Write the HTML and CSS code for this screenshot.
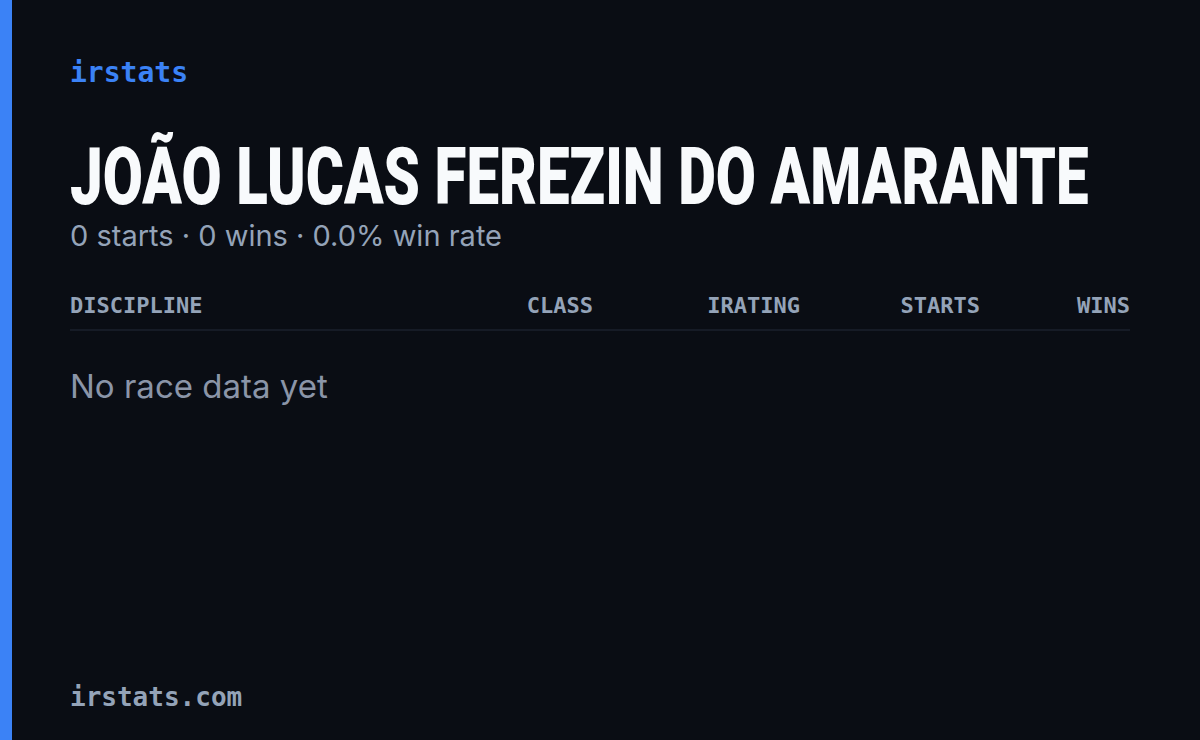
FILE: index.html
```html
<!DOCTYPE html>
<html lang="pt">
<head>
<meta charset="utf-8">
<title>João Lucas Ferezin do Amarante · irstats</title>
<link rel="stylesheet" href="styles.css">
</head>
<body>
<div class="card">
  <div class="accent"></div>
  <main class="content">
    <div class="brand">irstats</div>
    <h1 class="driver"><span class="driver-name">JOÃO LUCAS FEREZIN DO AMARANTE</span></h1>
    <p class="summary">0 starts · 0 wins · 0.0% win rate</p>
    <div class="table">
      <div class="thead">
        <span class="col col-discipline">DISCIPLINE</span>
        <span class="col col-class">CLASS</span>
        <span class="col col-irating">IRATING</span>
        <span class="col col-starts">STARTS</span>
        <span class="col col-wins">WINS</span>
      </div>
      <p class="empty">No race data yet</p>
    </div>
    <footer class="site">irstats.com</footer>
  </main>
</div>
</body>
</html>
```

FILE: styles.css
```css
* { box-sizing: border-box; }

html, body {
  margin: 0;
  padding: 0;
  width: 1200px;
  height: 740px;
  background: #0a0d14;
  overflow: hidden;
}

.card {
  display: flex;
  width: 1200px;
  height: 740px;
}

.accent {
  width: 12px;
  flex: none;
  background: #3b82f6;
}

.content {
  flex: 1;
  min-width: 0;
  display: flex;
  flex-direction: column;
  padding: 57px 70px 28px 58px;
}

.brand {
  font-family: "DejaVu Sans Mono", monospace;
  font-size: 28px;
  font-weight: 600;
  color: #3b82f6;
  line-height: 32px;
}

.driver {
  margin: 48px 0 0;
  height: 80px;
  font-family: Roboto, "DejaVu Sans Condensed", sans-serif;
  font-weight: 900;
  font-size: 80px;
  line-height: 80px;
  color: #f8fafc;
  white-space: nowrap;
}

/* condensed display face: narrow the name horizontally;
   the negative margin gives back the width the scale removes */
.driver-name {
  display: inline-block;
  transform: scaleX(0.728);
  transform-origin: left center;
  margin-right: -380px;
}

.summary {
  margin: 1px 0 0;
  font-family: Inter, sans-serif;
  font-size: 29px;
  line-height: 36px;
  color: #94a3b8;
}

.table {
  margin-top: 40px;
}

.thead {
  display: grid;
  grid-template-columns: 1fr 130px 207px 180px 150px;
  padding-bottom: 11px;
  border-bottom: 2px solid #161b26;
}

.col {
  font-family: "DejaVu Sans Mono", monospace;
  font-size: 22px;
  font-weight: 700;
  line-height: 24px;
  color: #94a3b8;
  text-align: right;
}

.col-discipline { text-align: left; }

.empty {
  margin: 35px 0 0;
  font-family: Inter, sans-serif;
  font-size: 33px;
  line-height: 40px;
  color: #8b95a8;
}

.site {
  margin-top: auto;
  font-family: "DejaVu Sans Mono", monospace;
  font-size: 26px;
  font-weight: 700;
  line-height: 30px;
  color: #94a3b8;
}
```
